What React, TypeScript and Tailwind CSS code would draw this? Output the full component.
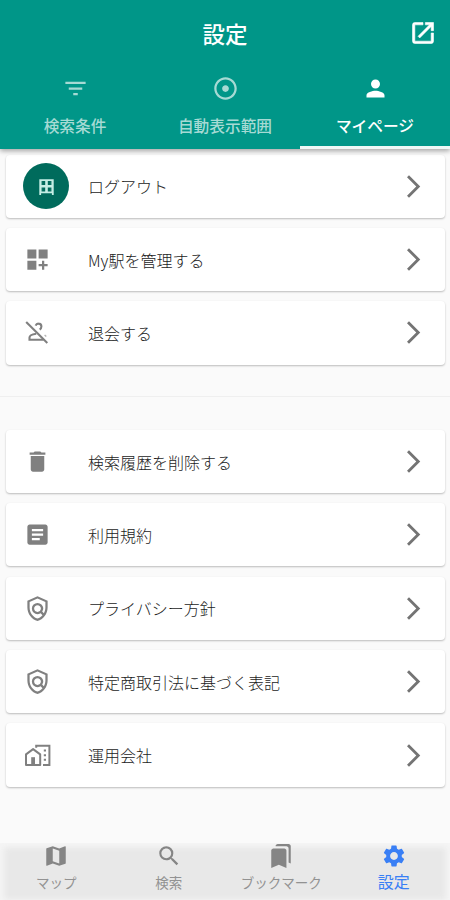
import type { ReactNode } from "react";
import type { IconType } from "react-icons";
import {
  MdAdjust,
  MdArrowForwardIos,
  MdArticle,
  MdBookmarks,
  MdDashboardCustomize,
  MdDelete,
  MdFilterList,
  MdMap,
  MdOutlinePolicy,
  MdPerson,
  MdSearch,
  MdSettings,
} from "react-icons/md";

function OpenInNewIcon() {
  return (
    <svg
      width="28"
      height="28"
      viewBox="0 0 24 24"
      className="mr-[13px] -mt-[2px] justify-self-end"
      fill="currentColor"
      stroke="currentColor"
      strokeWidth="0.5"
    >
      <path d="M19 19H5V5h7V3H5a2 2 0 0 0-2 2v14a2 2 0 0 0 2 2h14c1.1 0 2-.9 2-2v-7h-2v7zM14 3v2h3.59l-9.83 9.83 1.41 1.41L19 6.41V10h2V3h-7z" />
    </svg>
  );
}

function Tab({ Icon, label, active }: { Icon: IconType; label: string; active?: boolean }) {
  return (
    <div
      className={`flex flex-1 flex-col items-center border-b-[3px] pt-[8px] ${
        active ? "border-[#eef8f6] text-white" : "border-transparent text-[#a6dad4]"
      }`}
    >
      <Icon size={27} />
      <span className="mt-[12px] text-[15.7px] leading-[24px] font-medium whitespace-nowrap">{label}</span>
    </div>
  );
}

function Row({ icon, label }: { icon: ReactNode; label: string }) {
  return (
    <div className="flex h-[63.2px] items-center rounded-[4px] bg-white pr-[18px] shadow-[0_1px_2px_rgba(0,0,0,0.25)]">
      <div className="flex w-[82px] shrink-0 items-center pl-[18px]">{icon}</div>
      <span className="flex-1 text-[16px] leading-[24px] font-light whitespace-nowrap text-[#1c1c1c]">{label}</span>
      <MdArrowForwardIos size={27} className="text-[#747474]" />
    </div>
  );
}

function Avatar() {
  return (
    <div className="-ml-[1px] flex size-[46px] items-center justify-center rounded-full bg-[#006b5c]">
      <svg width="15" height="17" viewBox="0 0 15 17" className="mt-[3px]" fill="none" stroke="#c5eee5">
        <path d="M1.2 16V1.2H13.8V16M1.2 13.4H13.8" strokeWidth="1.8" />
        <path d="M7.5 1V13.5M1 7.3H14" strokeWidth="2.6" />
        <path d="M2.6 1V13.5M12.4 1V13.5" strokeWidth="1" opacity=".6" />
      </svg>
    </div>
  );
}

function RowIcon({ Icon }: { Icon: IconType }) {
  return <Icon size={27} className="text-[#808080]" />;
}

function PersonOffIcon() {
  return (
    <svg width="27" height="27" viewBox="0 0 27 27" fill="none" stroke="#808080" strokeWidth="2.1">
      <path d="M2.2 3L23.3 24" />
      <path d="M11.6 6.6C12.3 5 13.2 4.5 14.4 4.6C16.3 4.7 17.4 6 17.4 7.6C17.4 8.8 16.8 9.8 15.7 10.6" />
      <path d="M12.2 14.8C9.4 15.2 5.5 16.5 5.5 18.6V20.7H19.6" />
      <path d="M20.6 16L22.3 17.6" strokeWidth="1.4" opacity=".6" />
    </svg>
  );
}

function HomeWorkIcon() {
  return (
    <svg width="27" height="27" viewBox="0 0 27 27" fill="none" stroke="#808080" strokeWidth="2">
      <path d="M2 12.4L9.1 7.1L16.2 12.4V23.1H2Z" strokeLinejoin="round" />
      <path d="M7.2 23V15.2H11V23Z" fill="#808080" stroke="none" />
      <path d="M12.2 5.8V3.8H25.4V23.1H19" />
      <path d="M19.8 8.6H22M19.8 13.2H22M19.8 17.8H22" />
    </svg>
  );
}

function NavItem({ Icon, label, active }: { Icon: IconType; label: string; active?: boolean }) {
  return (
    <div className={`flex flex-1 flex-col items-center ${active ? "text-[#397ff5]" : "text-[#858585]"}`}>
      <Icon size={26} />
      <span
        className={`leading-[22px] whitespace-nowrap ${
          active ? "mt-[1px] text-[16px]" : "mt-[2px] text-[13.5px] text-[#929292]"
        }`}
      >
        {label}
      </span>
    </div>
  );
}

export default function App() {
  return (
    <div
      lang="ja"
      className="flex h-[900px] w-[450px] flex-col overflow-hidden bg-[#fafafa] font-['Noto_Sans_CJK_JP','Noto_Sans',sans-serif]"
    >
      <header className="z-10 flex h-[149px] shrink-0 flex-col bg-[#009688] shadow-[0_2px_5px_rgba(0,0,0,0.35)]">
        <div className="grid h-[67px] grid-cols-[1fr_auto_1fr] items-center text-white">
          <span />
          <h1 className="-mt-[2px] text-[22.5px] leading-[32px] font-medium">設定</h1>
          <OpenInNewIcon />
        </div>
        <nav className="flex flex-1">
          <Tab Icon={MdFilterList} label="検索条件" />
          <Tab Icon={MdAdjust} label="自動表示範囲" />
          <Tab Icon={MdPerson} label="マイページ" active />
        </nav>
      </header>
      <main className="flex flex-1 flex-col">
        <section className="flex flex-col gap-[10.2px] pt-[5.6px] pr-[5px] pl-[6px]">
          <Row icon={<Avatar />} label="ログアウト" />
          <Row icon={<RowIcon Icon={MdDashboardCustomize} />} label="My駅を管理する" />
          <Row icon={<PersonOffIcon />} label="退会する" />
        </section>
        <hr className="mt-[31.4px] mb-[33px] border-t border-[#efefef]" />
        <section className="flex flex-col gap-[10.2px] pr-[5px] pl-[6px]">
          <Row icon={<RowIcon Icon={MdDelete} />} label="検索履歴を削除する" />
          <Row icon={<RowIcon Icon={MdArticle} />} label="利用規約" />
          <Row icon={<RowIcon Icon={MdOutlinePolicy} />} label="プライバシー方針" />
          <Row icon={<RowIcon Icon={MdOutlinePolicy} />} label="特定商取引法に基づく表記" />
          <Row icon={<HomeWorkIcon />} label="運用会社" />
        </section>
      </main>
      <footer className="flex h-[57px] shrink-0 bg-[#e8e8e8] shadow-[inset_4px_4px_6px_#f5f5f5,inset_-4px_0_6px_#f5f5f5]">
        <NavItem Icon={MdMap} label="マップ" />
        <NavItem Icon={MdSearch} label="検索" />
        <NavItem Icon={MdBookmarks} label="ブックマーク" />
        <NavItem Icon={MdSettings} label="設定" active />
      </footer>
    </div>
  );
}
